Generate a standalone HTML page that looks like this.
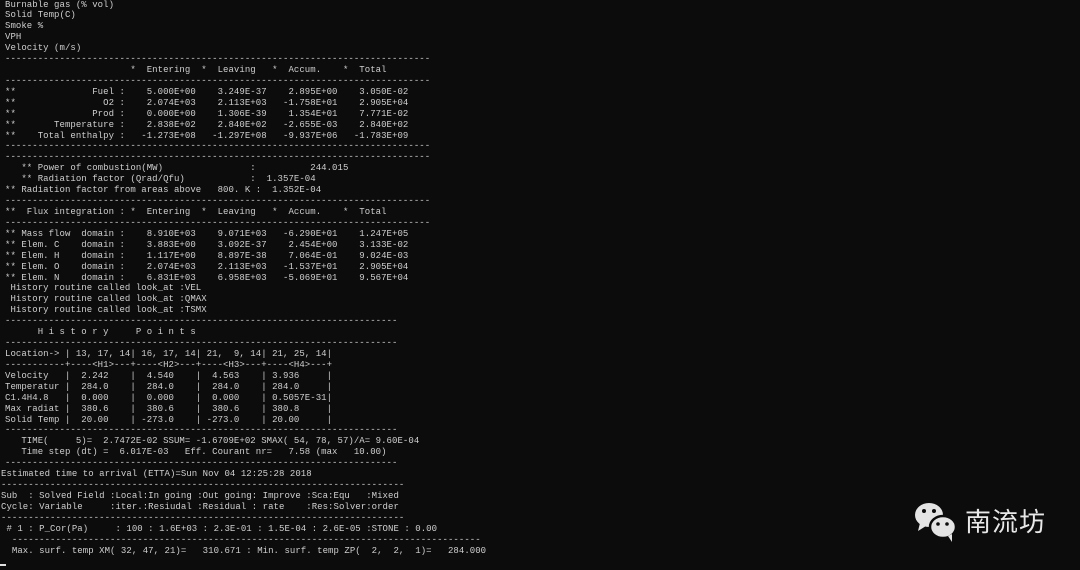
<!DOCTYPE html>
<html><head><meta charset="utf-8"><style>
html,body{margin:0;padding:0;background:#0c0c0c;width:1080px;height:570px;overflow:hidden;position:relative}
pre{margin:0;position:absolute;left:5px;top:-0.5px;font-family:"Liberation Mono",monospace;font-size:9px;letter-spacing:0.05px;line-height:10.92px;color:#cfcfcf}
.s{position:relative;left:-4px}
.cur{position:absolute;left:0;top:564px;width:6px;height:2px;background:#e0e0e0}
.logo{position:absolute;left:912px;top:500px;width:160px;height:44px}
.logo span{position:absolute;left:53px;top:2px;font-family:"Noto Sans CJK SC","WenQuanYi Zen Hei",sans-serif;font-size:26px;color:#e8e8e8;letter-spacing:1px}
</style></head><body>
<pre>Burnable gas (% vol)
Solid Temp(C)
Smoke %
VPH
Velocity (m/s)
------------------------------------------------------------------------------
                       *  Entering  *  Leaving   *  Accum.    *  Total
------------------------------------------------------------------------------
**              Fuel :    5.000E+00    3.249E-37    2.895E+00    3.050E-02
**                O2 :    2.074E+03    2.113E+03   -1.758E+01    2.905E+04
**              Prod :    0.000E+00    1.306E-39    1.354E+01    7.771E-02
**       Temperature :    2.838E+02    2.840E+02   -2.655E-03    2.840E+02
**    Total enthalpy :   -1.273E+08   -1.297E+08   -9.937E+06   -1.783E+09
------------------------------------------------------------------------------
------------------------------------------------------------------------------
   ** Power of combustion(MW)                :          244.015
   ** Radiation factor (Qrad/Qfu)            :  1.357E-04
** Radiation factor from areas above   800. K :  1.352E-04
------------------------------------------------------------------------------
**  Flux integration : *  Entering  *  Leaving   *  Accum.    *  Total
------------------------------------------------------------------------------
** Mass flow  domain :    8.910E+03    9.071E+03   -6.290E+01    1.247E+05
** Elem. C    domain :    3.883E+00    3.092E-37    2.454E+00    3.133E-02
** Elem. H    domain :    1.117E+00    8.897E-38    7.064E-01    9.024E-03
** Elem. O    domain :    2.074E+03    2.113E+03   -1.537E+01    2.905E+04
** Elem. N    domain :    6.831E+03    6.958E+03   -5.069E+01    9.567E+04
 History routine called look_at :VEL
 History routine called look_at :QMAX
 History routine called look_at :TSMX
------------------------------------------------------------------------
      H i s t o r y     P o i n t s
------------------------------------------------------------------------
Location-> | 13, 17, 14| 16, 17, 14| 21,  9, 14| 21, 25, 14|
-----------+----&lt;H1&gt;---+----&lt;H2&gt;---+----&lt;H3&gt;---+----&lt;H4&gt;---+
Velocity   |  2.242    |  4.540    |  4.563    | 3.936     |
Temperatur |  284.0    |  284.0    |  284.0    | 284.0     |
C1.4H4.8   |  0.000    |  0.000    |  0.000    | 0.5057E-31|
Max radiat |  380.6    |  380.6    |  380.6    | 380.8     |
Solid Temp |  20.00    | -273.0    | -273.0    | 20.00     |
------------------------------------------------------------------------
   TIME(     5)=  2.7472E-02 SSUM= -1.6709E+02 SMAX( 54, 78, 57)/A= 9.60E-04
   Time step (dt) =  6.017E-03   Eff. Courant nr=   7.58 (max   10.00)
------------------------------------------------------------------------
<span class="s">Estimated time to arrival (ETTA)=Sun Nov 04 12:25:28 2018</span>
<span class="s">--------------------------------------------------------------------------</span>
<span class="s">Sub  : Solved Field :Local:In going :Out going: Improve :Sca:Equ   :Mixed</span>
<span class="s">Cycle: Variable     :iter.:Resiudal :Residual : rate    :Res:Solver:order</span>
<span class="s">--------------------------------------------------------------------------</span>
<span class="s"> # 1 : P_Cor(Pa)     : 100 : 1.6E+03 : 2.3E-01 : 1.5E-04 : 2.6E-05 :STONE : 0.00</span>
<span class="s">  --------------------------------------------------------------------------------------</span>
<span class="s">  Max. surf. temp XM( 32, 47, 21)=   310.671 : Min. surf. temp ZP(  2,  2,  1)=   284.000</span>
</pre>
<div class="cur"></div>
<div class="logo">
<svg width="50" height="44" viewBox="0 0 50 44">
<ellipse cx="17" cy="15" rx="14" ry="12" fill="#e4e4e4"/>
<path d="M8 23 L6 31 L14 26 Z" fill="#e4e4e4"/>
<circle cx="12" cy="11" r="2" fill="#0c0c0c"/>
<circle cx="22" cy="11" r="2" fill="#0c0c0c"/>
<ellipse cx="31" cy="27" rx="13" ry="11" stroke="#0c0c0c" stroke-width="2.5" fill="#e4e4e4"/>
<path d="M36 36 L40 42 L40 34 Z" fill="#e4e4e4"/>
<circle cx="26" cy="24" r="1.8" fill="#0c0c0c"/>
<circle cx="35" cy="24" r="1.8" fill="#0c0c0c"/>
</svg>
<span>南流坊</span>
</div>
</body></html>
